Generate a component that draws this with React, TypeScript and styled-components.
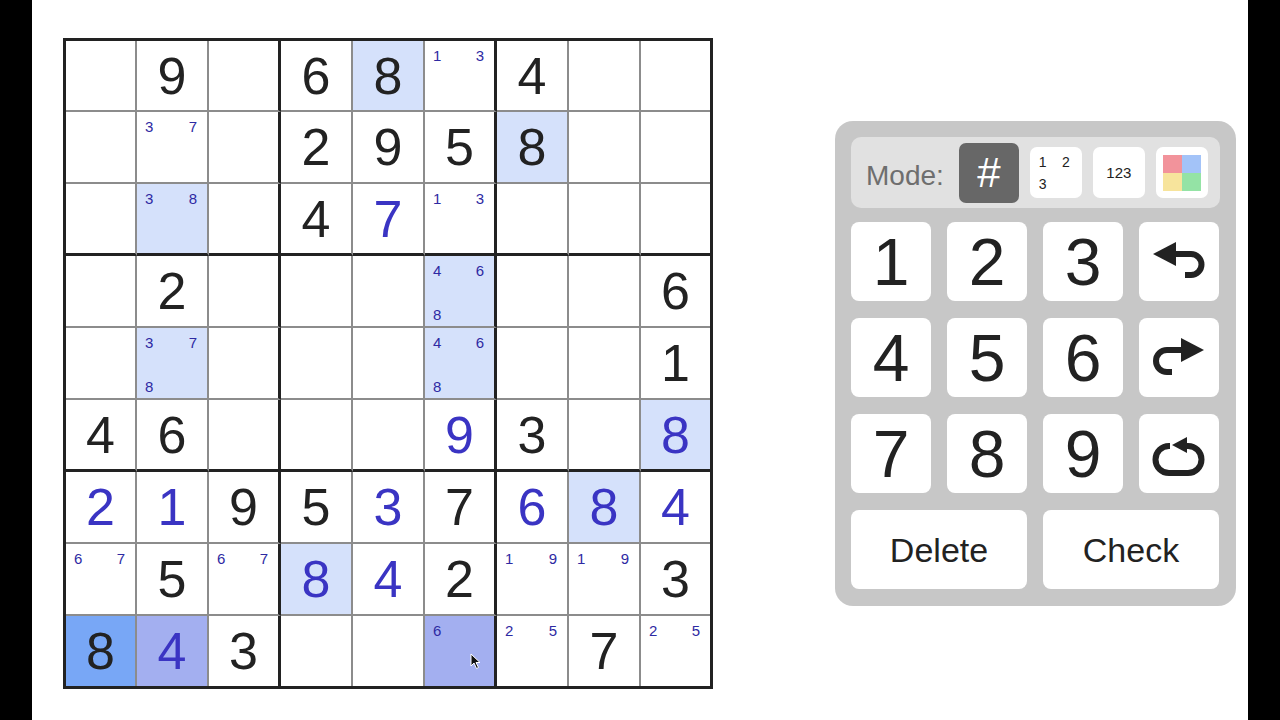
import React from "react";
import styled, { createGlobalStyle } from "styled-components";

const GlobalStyle = createGlobalStyle`
  html, body {
    margin: 0;
    padding: 0;
    background: #000;
  }
  body {
    font-family: "Liberation Sans", Arial, sans-serif;
  }
`;

type Highlight = "peer" | "sel" | "lav";

interface CellData {
  v?: number;
  given?: boolean;
  marks?: number[];
  hl?: Highlight;
}

const E: CellData = {};
const G = (v: number, hl?: Highlight): CellData => ({ v, given: true, hl });
const U = (v: number, hl?: Highlight): CellData => ({ v, hl });
const M = (marks: number[], hl?: Highlight): CellData => ({ marks, hl });

const board: CellData[][] = [
  [E, G(9), E, G(6), G(8, "peer"), M([1, 3]), G(4), E, E],
  [E, M([3, 7]), E, G(2), G(9), G(5), G(8, "peer"), E, E],
  [E, M([3, 8], "peer"), E, G(4), U(7), M([1, 3]), E, E, E],
  [E, G(2), E, E, E, M([4, 6, 8], "peer"), E, E, G(6)],
  [E, M([3, 7, 8], "peer"), E, E, E, M([4, 6, 8], "peer"), E, E, G(1)],
  [G(4), G(6), E, E, E, U(9), G(3), E, U(8, "peer")],
  [U(2), U(1), G(9), G(5), U(3), G(7), U(6), U(8, "peer"), U(4)],
  [M([6, 7]), G(5), M([6, 7]), U(8, "peer"), U(4), G(2), M([1, 9]), M([1, 9]), G(3)],
  [G(8, "sel"), U(4, "lav"), G(3), E, E, M([6], "lav"), M([2, 5]), G(7), M([2, 5])],
];

const hlColor: Record<Highlight, string> = {
  peer: "#d5e1fb",
  sel: "#78a7f6",
  lav: "#a3aff0",
};

const Page = styled.div`
  width: 1216px;
  min-height: 720px;
  margin: 0 auto;
  background: #fff;
  display: flex;
  align-items: flex-start;
  gap: 122px;
  padding: 38px 0 0 31px;
  box-sizing: border-box;
`;

const Board = styled.div`
  border: 3px solid #222;
  display: grid;
  grid-template-columns: 71px repeat(7, 72px) 69px;
  grid-template-rows: 71px repeat(7, 72px) 70px;
`;

const lineFor = (i: number) =>
  i === 8 ? "none" : i === 2 || i === 5 ? "3px solid #222" : "2px solid #8c8c8c";

const Cell = styled.div<{ $row: number; $col: number; $hl?: Highlight }>`
  position: relative;
  box-sizing: border-box;
  border-right: ${(p) => lineFor(p.$col)};
  border-bottom: ${(p) => lineFor(p.$row)};
  background: ${(p) => (p.$hl ? hlColor[p.$hl] : "#fff")};
  display: flex;
  align-items: center;
  justify-content: center;
`;

const Digit = styled.span<{ $given?: boolean }>`
  font-size: 52px;
  line-height: 1;
  color: ${(p) => (p.$given ? "#222" : "#3a34c3")};
`;

const Pencil = styled.div`
  width: 100%;
  height: 100%;
  box-sizing: border-box;
  padding: 7px 10px 4px 8px;
  display: grid;
  grid-template-columns: 1fr 1fr;
  grid-template-rows: 1fr 1fr;
`;

const Mark = styled.span<{ $i: number }>`
  font-size: 15px;
  line-height: 1;
  color: #2e2aa3;
  justify-self: ${(p) => (p.$i % 2 === 0 ? "start" : "end")};
  align-self: ${(p) => (p.$i < 2 ? "start" : "end")};
`;

const Cursor = styled.svg`
  position: absolute;
  left: 45px;
  top: 37px;
  width: 11px;
  height: 17px;
`;

const Panel = styled.div`
  margin-top: 83px;
  width: 401px;
  height: 485px;
  box-sizing: border-box;
  padding: 16px;
  background: #c7c7c7;
  border-radius: 18px;
  display: flex;
  flex-direction: column;
  gap: 14px;
`;

const ModeBar = styled.div`
  height: 71px;
  background: #e1e1e1;
  border-radius: 10px;
  display: flex;
  align-items: center;
  padding: 0 12px 0 15px;
  gap: 11px;
`;

const ModeLabel = styled.span`
  font-size: 28px;
  color: #6e6e6e;
  margin-right: 4px;
  padding-top: 7px;
`;

const ModeButton = styled.div<{ $active?: boolean }>`
  width: ${(p) => (p.$active ? 60 : 52)}px;
  height: ${(p) => (p.$active ? 60 : 51)}px;
  border-radius: 7px;
  background: ${(p) => (p.$active ? "#676767" : "#fff")};
  color: ${(p) => (p.$active ? "#fff" : "#222")};
  display: flex;
  align-items: center;
  justify-content: center;
  box-sizing: border-box;
`;

const Hash = styled.span`
  font-size: 42px;
  line-height: 1;
`;

const MiniMarks = styled.div`
  width: 100%;
  height: 100%;
  box-sizing: border-box;
  padding: 8px 12px 7px 9px;
  display: grid;
  grid-template-columns: 1fr 1fr;
  grid-template-rows: 1fr 1fr;
  font-size: 14px;
  line-height: 1;
`;

const MiniMark = styled.span<{ $i: number }>`
  justify-self: ${(p) => (p.$i % 2 === 0 ? "start" : "end")};
  align-self: ${(p) => (p.$i < 2 ? "start" : "end")};
`;

const MiniText = styled.span`
  font-size: 15px;
`;

const Swatch = styled.div`
  width: 38px;
  height: 36px;
  display: grid;
  grid-template-columns: 1fr 1fr;
  grid-template-rows: 1fr 1fr;
`;

const SwatchTile = styled.div<{ $color: string }>`
  background: ${(p) => p.$color};
`;

const Keys = styled.div`
  display: grid;
  grid-template-columns: repeat(4, 80px);
  grid-auto-rows: 79px;
  column-gap: 16px;
  row-gap: 17px;
`;

const Key = styled.div<{ $wide?: boolean }>`
  grid-column: ${(p) => (p.$wide ? "span 2" : "auto")};
  background: #fff;
  border-radius: 8px;
  display: flex;
  align-items: center;
  justify-content: center;
  color: #222;
  font-size: ${(p) => (p.$wide ? 34 : 66)}px;
  line-height: 1;
`;

const Icon = styled.svg`
  width: 80px;
  height: 80px;
`;

const UndoIcon = () => (
  <Icon viewBox="0 0 80 80">
    <polygon points="14,32 37,20 37,44" fill="#222" />
    <path d="M35 32 H52 A10.5 10.5 0 0 1 52 53 H46" fill="none" stroke="#222" strokeWidth="6" />
  </Icon>
);

const RedoIcon = () => (
  <Icon viewBox="0 0 80 80">
    <polygon points="65,32 42,20 42,44" fill="#222" />
    <path d="M44 32 H28 A11 11 0 0 0 28 54 H33" fill="none" stroke="#222" strokeWidth="6" />
  </Icon>
);

const RestartIcon = () => (
  <Icon viewBox="0 0 80 80">
    <path
      d="M31 32 H30 A13.5 13.5 0 0 0 30 59 H49 A13.5 13.5 0 0 0 49 32 H45"
      fill="none"
      stroke="#222"
      strokeWidth="6"
    />
    <polygon points="33,31 48,23 48,39" fill="#222" />
  </Icon>
);

const swatchColors = ["#f2939b", "#a3c3f8", "#f7e49c", "#94e3a5"];

export default function App() {
  return (
    <>
      <GlobalStyle />
      <Page>
        <Board>
          {board.map((row, r) =>
            row.map((cell, c) => (
              <Cell key={`${r}-${c}`} $row={r} $col={c} $hl={cell.hl}>
                {cell.v !== undefined && <Digit $given={cell.given}>{cell.v}</Digit>}
                {cell.marks && (
                  <Pencil>
                    {cell.marks.map((m, i) => (
                      <Mark key={m} $i={i}>
                        {m}
                      </Mark>
                    ))}
                  </Pencil>
                )}
                {r === 8 && c === 5 && (
                  <Cursor viewBox="0 0 11 17">
                    <path
                      d="M1 1 L1 13 L4 10 L6.5 15.5 L8.5 14.5 L6 9.5 L10 9.5 Z"
                      fill="#111"
                      stroke="#fff"
                      strokeWidth="1"
                    />
                  </Cursor>
                )}
              </Cell>
            ))
          )}
        </Board>

        <Panel>
          <ModeBar>
            <ModeLabel>Mode:</ModeLabel>
            <ModeButton $active>
              <Hash>#</Hash>
            </ModeButton>
            <ModeButton>
              <MiniMarks>
                {[1, 2, 3].map((n, i) => (
                  <MiniMark key={n} $i={i}>
                    {n}
                  </MiniMark>
                ))}
              </MiniMarks>
            </ModeButton>
            <ModeButton>
              <MiniText>123</MiniText>
            </ModeButton>
            <ModeButton>
              <Swatch>
                {swatchColors.map((col) => (
                  <SwatchTile key={col} $color={col} />
                ))}
              </Swatch>
            </ModeButton>
          </ModeBar>

          <Keys>
            <Key>1</Key>
            <Key>2</Key>
            <Key>3</Key>
            <Key>
              <UndoIcon />
            </Key>
            <Key>4</Key>
            <Key>5</Key>
            <Key>6</Key>
            <Key>
              <RedoIcon />
            </Key>
            <Key>7</Key>
            <Key>8</Key>
            <Key>9</Key>
            <Key>
              <RestartIcon />
            </Key>
            <Key $wide>Delete</Key>
            <Key $wide>Check</Key>
          </Keys>
        </Panel>
      </Page>
    </>
  );
}
